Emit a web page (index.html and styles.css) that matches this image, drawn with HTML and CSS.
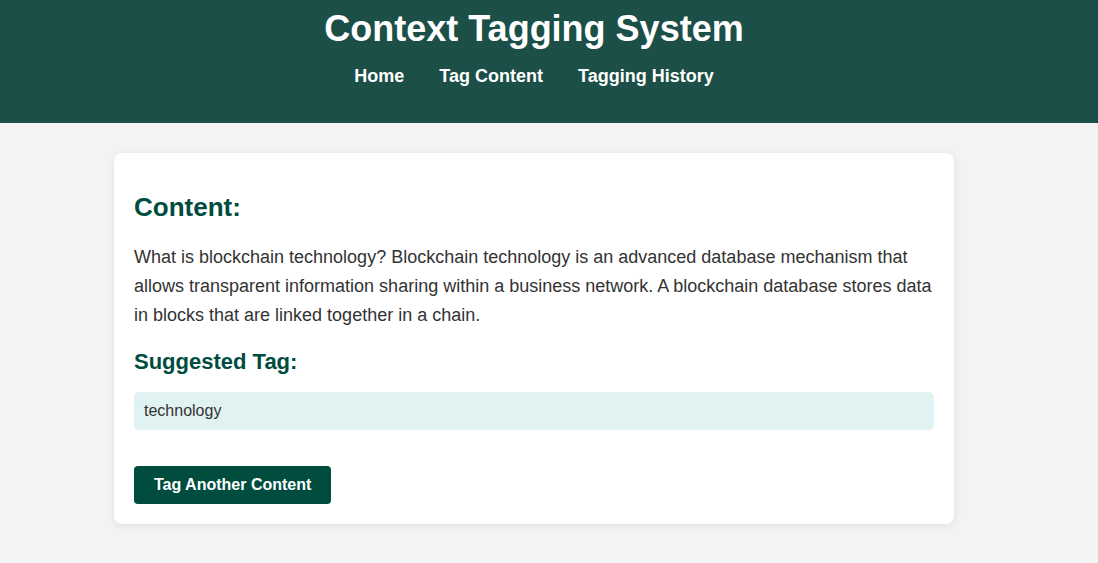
FILE: index.html
```html
<!DOCTYPE html>
<html lang="en">
<head>
<meta charset="utf-8">
<title>Context Tagging System</title>
<link rel="stylesheet" href="styles.css">
</head>
<body>
<header class="site-header">
  <div class="header-inner">
    <h1 class="site-title">Context Tagging System</h1>
    <nav class="site-nav">
      <a href="#">Home</a>
      <a href="#">Tag Content</a>
      <a href="#">Tagging History</a>
    </nav>
  </div>
</header>
<main class="page">
  <section class="card">
    <h2 class="card-title">Content:</h2>
    <p class="content-text">What is blockchain technology? Blockchain technology is an advanced database mechanism that allows transparent information sharing within a business network. A blockchain database stores data in blocks that are linked together in a chain.</p>
    <h3 class="tag-title">Suggested Tag:</h3>
    <div class="tag-box">technology</div>
    <a class="btn" href="#">Tag Another Content</a>
  </section>
</main>
</body>
</html>
```
FILE: styles.css
```css
* { box-sizing: border-box; }
html, body { margin: 0; padding: 0; }
body {
  background: #f3f3f3;
  font-family: "Liberation Sans", Arial, sans-serif;
  color: #333;
  height: 563px;
}
.site-header {
  background: #1b4f48;
  height: 123px;
  padding-top: 8px;
}
.header-inner {
  width: 1068px;
  display: flex;
  flex-direction: column;
  align-items: center;
}
.site-title {
  margin: 0;
  color: #fff;
  font-size: 36px;
  line-height: 42px;
  font-weight: bold;
}
.site-nav {
  display: flex;
  gap: 35px;
  margin-top: 15px;
}
.site-nav a {
  color: #fff;
  text-decoration: none;
  font-weight: bold;
  font-size: 18px;
  line-height: 22px;
}
.page {
  width: 1068px;
  padding-top: 30px;
}
.card {
  width: 840px;
  margin: 0 auto;
  background: #fff;
  border-radius: 8px;
  box-shadow: 0 2px 8px rgba(0,0,0,0.08);
  padding: 20px 20px 20px;
}
.card-title {
  margin: 18px 0 0;
  color: #004d40;
  font-size: 26px;
  line-height: 32px;
}
.content-text {
  margin: 20px 0 0;
  font-size: 18px;
  line-height: 29px;
}
.tag-title {
  margin: 19px 0 0;
  color: #004d40;
  font-size: 22px;
  line-height: 26px;
}
.tag-box {
  margin-top: 17px;
  background: #e0f2f1;
  border-radius: 5px;
  padding: 0 10px;
  height: 38px;
  line-height: 38px;
  font-size: 16px;
}
.btn {
  display: inline-block;
  margin-top: 36px;
  background: #004d40;
  color: #fff;
  font-weight: bold;
  font-size: 16px;
  text-decoration: none;
  height: 38px;
  line-height: 38px;
  padding: 0 20px;
  border-radius: 4px;
}
```
